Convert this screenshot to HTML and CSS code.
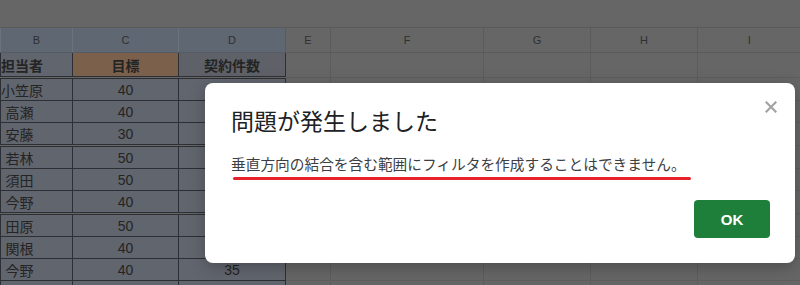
FILE: index.html
```html
<!DOCTYPE html>
<html lang="ja">
<head>
    <meta charset="UTF-8">
    <meta name="viewport" content="width=device-width, initial-scale=1.0">
    <title>フィルタのエラー</title>
    <link rel="stylesheet" href="styles.css">
</head>
<body>

    <div class="sheet">
        <div class="toolbar"></div>

        <table class="grid">
            <colgroup>
                <col style="width:72px">
                <col style="width:106px">
                <col style="width:107px">
                <col style="width:45px">
                <col style="width:153px">
                <col style="width:107px">
                <col style="width:107px">
                <col style="width:103px">
            </colgroup>
            <tr class="col-head">
                <th class="sel">B</th>
                <th class="sel">C</th>
                <th class="sel">D</th>
                <th>E</th>
                <th>F</th>
                <th>G</th>
                <th>H</th>
                <th>I</th>
            </tr>
            <tr class="head-row">
                <td class="name h-b">担当者</td>
                <td class="h-c">目標</td>
                <td class="h-d">契約件数</td>
                <td class="empty"></td><td class="empty"></td><td class="empty"></td><td class="empty"></td><td class="empty"></td>
            </tr>
            <tr class="sep">
                <td class="name">小笠原</td><td class="data">40</td><td class="data"></td>
                <td class="empty"></td><td class="empty"></td><td class="empty"></td><td class="empty"></td><td class="empty"></td>
            </tr>
            <tr>
                <td class="name">高瀬</td><td class="data">40</td><td class="data"></td>
                <td class="empty"></td><td class="empty"></td><td class="empty"></td><td class="empty"></td><td class="empty"></td>
            </tr>
            <tr>
                <td class="name">安藤</td><td class="data">30</td><td class="data"></td>
                <td class="empty"></td><td class="empty"></td><td class="empty"></td><td class="empty"></td><td class="empty"></td>
            </tr>
            <tr class="sep">
                <td class="name">若林</td><td class="data">50</td><td class="data"></td>
                <td class="empty"></td><td class="empty"></td><td class="empty"></td><td class="empty"></td><td class="empty"></td>
            </tr>
            <tr>
                <td class="name">須田</td><td class="data">50</td><td class="data"></td>
                <td class="empty"></td><td class="empty"></td><td class="empty"></td><td class="empty"></td><td class="empty"></td>
            </tr>
            <tr>
                <td class="name">今野</td><td class="data">40</td><td class="data"></td>
                <td class="empty"></td><td class="empty"></td><td class="empty"></td><td class="empty"></td><td class="empty"></td>
            </tr>
            <tr class="sep">
                <td class="name">田原</td><td class="data">50</td><td class="data"></td>
                <td class="empty"></td><td class="empty"></td><td class="empty"></td><td class="empty"></td><td class="empty"></td>
            </tr>
            <tr>
                <td class="name">関根</td><td class="data">40</td><td class="data"></td>
                <td class="empty"></td><td class="empty"></td><td class="empty"></td><td class="empty"></td><td class="empty"></td>
            </tr>
            <tr>
                <td class="name">今野</td><td class="data">40</td><td class="data">35</td>
                <td class="empty"></td><td class="empty"></td><td class="empty"></td><td class="empty"></td><td class="empty"></td>
            </tr>
            <tr>
                <td class="name"></td><td class="data"></td><td class="data"></td>
                <td class="empty"></td><td class="empty"></td><td class="empty"></td><td class="empty"></td><td class="empty"></td>
            </tr>
        </table>
    </div>

    <!-- error dialog over the sheet -->
    <div class="dialog">
        <button class="close" type="button" aria-label="閉じる">
            <svg width="12" height="12" viewBox="0 0 12 12">
                <path d="M1.5 1.5 L10.5 10.5 M10.5 1.5 L1.5 10.5" stroke="#a3a3a3" stroke-width="2.2" stroke-linecap="square"/>
            </svg>
        </button>
        <h2 class="dialog-title">問題が発生しました</h2>
        <p class="dialog-text">垂直方向の結合を含む範囲にフィルタを作成することはできません。</p>
        <div class="mark"></div>
        <div class="dialog-foot">
            <button class="ok" type="button">OK</button>
        </div>
    </div>

</body>
</html>
```

FILE: styles.css
```css
body {
    margin: 0;
    background-color: #666666;
    font-family: "Liberation Sans", "Noto Sans CJK JP", sans-serif;
    width: 800px;
    height: 285px;
    overflow: hidden;
}

.sheet {
    width: 800px;
    height: 285px;
    overflow: hidden;
}

.toolbar {
    height: 28px;
    background-color: #666666;
    border-bottom: 1px solid #5a5a5a;
    box-sizing: border-box;
}

.grid {
    border-collapse: collapse;
    table-layout: fixed;
    width: 800px;
}

.grid th,
.grid td {
    padding: 0;
    font-size: 14px;
    color: #242424;
    white-space: nowrap;
    overflow: hidden;
}

/* column letters */
.col-head th {
    height: 24px;
    font-size: 11px;
    font-weight: normal;
    color: #303030;
    background-color: #666666;
    border-left: 1px solid #5b5b5b;
    border-bottom: 1px solid #5b5b5b;
}

.col-head th.sel {
    background-color: #5e6772;
    border-left: 1px solid #6a727c;
    border-bottom: 1px solid #545b64;
}

.head-row td {
    height: 23px;
    font-weight: bold;
    text-align: center;
    border: 1px solid #2c2f34;
}

.h-b {
    background-color: #6d685f;
}

.h-c {
    background-color: #7b604c;
}

.h-d {
    background-color: #5e6268;
}

.grid tr:not(.col-head):not(.head-row) td {
    height: 21px;
}

.name,
.data {
    background-color: #61656d;
    border: 1px solid #2c2f34;
    text-align: center;
}

.name {
    padding-right: 34px !important;
}

.grid .empty {
    background-color: #666666;
    border: none;
    border-left: 1px solid #5c5c5c;
    border-bottom: 1px solid #5e5e5e;
}

.grid tr.sep td.name,
.grid tr.sep td.data {
    border-top: 3px double #2c2f34;
}

/* dialog */
.dialog {
    position: absolute;
    left: 205px;
    top: 83px;
    width: 590px;
    height: 180px;
    box-sizing: border-box;
    padding: 24px 25px 25px 26px;
    background-color: #ffffff;
    border-radius: 8px;
    box-shadow: 0 4px 16px rgba(0, 0, 0, 0.25);
    display: flex;
    flex-direction: column;
}

.close {
    position: absolute;
    top: 17px;
    right: 17px;
    width: 14px;
    height: 14px;
    padding: 1px;
    border: none;
    background: none;
    cursor: pointer;
}

.close svg {
    display: block;
}

.dialog-title {
    margin: 0;
    font-size: 23px;
    line-height: 30px;
    font-weight: normal;
    color: #202124;
}

.dialog-text {
    margin: 17px 0 0 0;
    font-size: 14.7px;
    line-height: 22px;
    color: #3c4043;
}

.mark {
    margin: 1px 0 0 2px;
    width: 458px;
    height: 3px;
    border-radius: 2px;
    background-color: #e8222b;
}

.dialog-foot {
    margin-top: auto;
    display: flex;
    justify-content: flex-end;
}

.ok {
    width: 76px;
    height: 38px;
    border: none;
    border-radius: 4px;
    background-color: #1e7f3a;
    color: #ffffff;
    font-family: "Liberation Sans", sans-serif;
    font-size: 15px;
    font-weight: bold;
    cursor: pointer;
}
```
